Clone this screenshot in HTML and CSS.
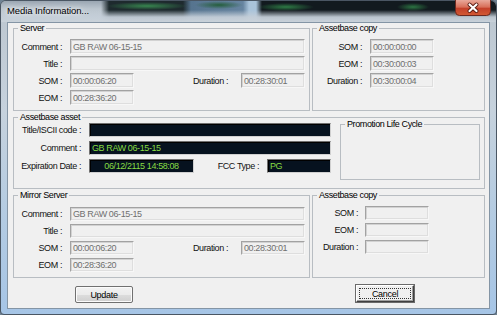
FILE: index.html
```html
<!DOCTYPE html>
<html>
<head>
<meta charset="utf-8">
<link rel="stylesheet" href="styles.css">
</head>
<body>
<div class="window">
  <div class="titlebar">
    <span class="title">Media Information...</span>
    <div class="close">
      <svg width="36" height="16" viewBox="0 0 36 16">
        <defs>
          <linearGradient id="cg" x1="0" y1="0" x2="0" y2="1">
            <stop offset="0" stop-color="#e9a99b"/>
            <stop offset="0.45" stop-color="#d8705a"/>
            <stop offset="0.55" stop-color="#c4412a"/>
            <stop offset="1" stop-color="#d35a34"/>
          </linearGradient>
        </defs>
        <path d="M0.5 0 V11.5 Q0.5 15.5 4.5 15.5 H31.5 Q35.5 15.5 35.5 11.5 V0" fill="url(#cg)" stroke="#6d2a20"/>
        <path d="M14.5 4.5 L21.5 11 M21.5 4.5 L14.5 11" stroke="#5a1c12" stroke-width="4" stroke-linecap="round"/>
        <path d="M14.5 4.5 L21.5 11 M21.5 4.5 L14.5 11" stroke="#ffffff" stroke-width="2.2" stroke-linecap="round"/>
      </svg>
    </div>
  </div>
  <div class="client">
    <div class="row">
      <fieldset class="group server">
        <legend>Server</legend>
        <div class="grid grid-server">
          <span class="lbl">Comment :</span><div class="field span-all">GB RAW 06-15-15</div>
          <span class="lbl">Title :</span><div class="field span-all"></div>
          <span class="lbl">SOM :</span><div class="field">00:00:06:20</div><span class="lbl lbl-dur">Duration :</span><div class="field">00:28:30:01</div>
          <span class="lbl">EOM :</span><div class="field">00:28:36:20</div>
        </div>
      </fieldset>
      <fieldset class="group copy">
        <legend>Assetbase copy</legend>
        <div class="grid grid-copy">
          <span class="lbl">SOM :</span><div class="field">00:00:00:00</div>
          <span class="lbl">EOM :</span><div class="field">00:30:00:03</div>
          <span class="lbl">Duration :</span><div class="field">00:30:00:04</div>
        </div>
      </fieldset>
    </div>

    <fieldset class="group asset">
      <legend>Assetbase asset</legend>
      <div class="asset-body">
        <div class="grid grid-asset">
          <span class="lbl">Title/ISCII code :</span><div class="field dark span-all"></div>
          <span class="lbl">Comment :</span><div class="field dark span-all">GB RAW 06-15-15</div>
          <span class="lbl">Expiration Date :</span><div class="field dark center">06/12/2115 14:58:08</div><span class="lbl">FCC Type :</span><div class="field dark">PG</div>
        </div>
        <fieldset class="group promo">
          <legend>Promotion Life Cycle</legend>
        </fieldset>
      </div>
    </fieldset>

    <div class="row row-mirror">
      <fieldset class="group server">
        <legend>Mirror Server</legend>
        <div class="grid grid-server grid-mirror">
          <span class="lbl">Comment :</span><div class="field span-all">GB RAW 06-15-15</div>
          <span class="lbl">Title :</span><div class="field span-all"></div>
          <span class="lbl">SOM :</span><div class="field">00:00:06:20</div><span class="lbl lbl-dur">Duration :</span><div class="field">00:28:30:01</div>
          <span class="lbl">EOM :</span><div class="field">00:28:36:20</div>
        </div>
      </fieldset>
      <fieldset class="group copy">
        <legend>Assetbase copy</legend>
        <div class="grid grid-copy2">
          <span class="lbl">SOM :</span><div class="field"></div>
          <span class="lbl">EOM :</span><div class="field"></div>
          <span class="lbl">Duration :</span><div class="field"></div>
        </div>
      </fieldset>
    </div>

    <div class="actions">
      <button class="btn btn-update">Update</button>
      <button class="btn btn-cancel"><span class="focus">Cancel</span></button>
    </div>
  </div>
</div>
</body>
</html>
```

FILE: styles.css
```css
* { box-sizing: border-box; }

html, body {
  margin: 0;
  padding: 0;
}

body {
  width: 497px;
  height: 315px;
  overflow: hidden;
  background: #6f8293;
  font-family: "Liberation Sans", Arial, sans-serif;
  font-size: 9px;
  letter-spacing: -0.4px;
  color: #000;
}

.window {
  width: 497px;
  height: 315px;
  display: flex;
  flex-direction: column;
  border: 1px solid #4a5663;
  border-radius: 6px 6px 4px 4px;
  padding: 0 6px 5px;
  background: linear-gradient(to bottom, #bcc6cf 0%, #c6d2dd 35%, #b3cbe2 70%, #a6c5e6 100%);
}

.titlebar {
  height: 21px;
  margin: 0 -6px;
  padding: 0 5px 0 6px;
  display: flex;
  justify-content: space-between;
  align-items: flex-start;
  border-radius: 5px 5px 0 0;
  background:
    linear-gradient(to bottom, rgba(196, 206, 216, 0) 9px, rgba(196, 206, 216, 0.95) 16px, #c9d2da 21px),
    radial-gradient(ellipse 40px 4px at 146px 5px, rgba(60, 150, 85, 0.85), rgba(60, 150, 85, 0) 100%),
    radial-gradient(ellipse 24px 4px at 218px 4px, rgba(30, 90, 50, 0.9), rgba(30, 90, 50, 0) 100%),
    radial-gradient(ellipse 28px 4px at 285px 6px, rgba(50, 140, 75, 0.85), rgba(50, 140, 75, 0) 100%),
    radial-gradient(ellipse 16px 4px at 412px 6px, rgba(50, 140, 75, 0.8), rgba(50, 140, 75, 0) 100%),
    linear-gradient(to right, rgba(0,0,0,0) 0, rgba(0,0,0,0) 100px, #1e2a2e 108px, #1e2a2e 182px, #56748f 190px, #6684a0 242px, #a9c3da 248px, #a9c3da 255px, #121a1f 261px, #121a1f 100%),
    linear-gradient(to bottom, #9aa6b2 0, #bcc6cf 8px, #c4cdd6 100%);
}

.title {
  margin-top: 4px;
  font-size: 9.5px;
  line-height: 12px;
  letter-spacing: -0.1px;
  color: #000;
  text-shadow: 0 0 4px #fff, 0 0 8px rgba(255, 255, 255, 0.9);
  white-space: nowrap;
}

.close {
  margin-top: -1px;
  width: 36px;
  height: 16px;
}

.close svg {
  display: block;
}

.client {
  flex: 1;
  background: #f0f0f0;
  border: 1px solid #8495a5;
  padding: 0 4px 0 5px;
  display: flex;
  flex-direction: column;
}

.row {
  display: flex;
  gap: 2px;
}

.row-mirror {
  margin-top: 1px;
}

fieldset.group {
  margin: 0;
  padding: 0;
  min-width: 0;
  border: 1px solid #b8bdc2;
}

fieldset.group legend {
  font-size: 9px;
  line-height: 11px;
  padding: 0 2px;
  margin-left: 4px;
  white-space: nowrap;
}

fieldset.server {
  width: 297px;
  height: 88px;
}

fieldset.copy {
  width: 173px;
  height: 88px;
}

fieldset.asset {
  height: 77px;
  margin-top: 1px;
}

.grid {
  display: grid;
  column-gap: 8px;
}

.grid-server {
  grid-template-columns: 48px 64px 91px 64px;
  grid-auto-rows: 15px;
  row-gap: 2px;
  margin-top: 5px;
}

.grid-mirror {
  grid-auto-rows: 14px;
  row-gap: 3px;
  margin-top: 6px;
}

.grid-copy {
  grid-template-columns: 49px 64px;
  grid-auto-rows: 15px;
  row-gap: 2px;
  margin-top: 5px;
}

.grid-copy2 {
  grid-template-columns: 45px 64px;
  column-gap: 7px;
  grid-auto-rows: 14px;
  row-gap: 3px;
  margin-top: 5px;
}

.asset-body {
  display: flex;
  align-items: flex-start;
}

.grid-asset {
  grid-template-columns: 67px 105px 57px 64px;
  grid-auto-rows: 14px;
  row-gap: 4px;
}

fieldset.promo {
  width: 140px;
  height: 61px;
  margin-left: 9px;
  margin-top: -4px;
}

.span-all {
  grid-column: 2 / -1;
}

.lbl {
  text-align: right;
  white-space: nowrap;
  display: flex;
  align-items: center;
  justify-content: flex-end;
  color: #111;
}

.lbl-dur {
  padding-right: 5px;
}

.field {
  display: flex;
  align-items: center;
  padding: 0 2px;
  background: #f0f0f0;
  color: #6f6f6f;
  border: 1px solid;
  border-color: #a2a2a2 #f7f7f7 #f7f7f7 #a2a2a2;
  box-shadow: inset 1px 1px 0 #d2d2d2, inset -1px -1px 0 #dedede;
  white-space: nowrap;
  overflow: hidden;
}

.field.dark {
  background: #06121f;
  color: #86dc42;
  border-color: #707070 #d0d0d0 #d0d0d0 #707070;
  box-shadow: inset 1px 1px 0 #000;
}

.field.center {
  justify-content: center;
}

.actions {
  display: flex;
  align-items: flex-start;
  margin-top: 7px;
  padding-left: 62px;
}

.btn {
  width: 58px;
  height: 17px;
  margin: 0;
  padding: 0;
  font-family: "Liberation Sans", Arial, sans-serif;
  font-size: 9px;
  letter-spacing: -0.3px;
  color: #000;
  cursor: default;
}

.btn-update {
  margin-top: 1px;
  border: 1px solid #707070;
  border-radius: 2px;
  background: linear-gradient(to bottom, #f2f2f2 0%, #ebebeb 50%, #dddddd 51%, #cfcfcf 100%);
  box-shadow: inset 0 0 0 1px #fbfbfb;
}

.btn-cancel {
  margin-left: 223px;
  border: 1px solid;
  border-color: #ffffff #404040 #404040 #ffffff;
  background: #f0f0f0;
  box-shadow: inset -1px -1px 0 #a0a0a0, 0 0 0 1px #6a6a6a;
  padding: 2px;
  display: flex;
}

.btn-cancel .focus {
  flex: 1;
  display: flex;
  align-items: center;
  justify-content: center;
  border: 1px dotted #333;
}
```
